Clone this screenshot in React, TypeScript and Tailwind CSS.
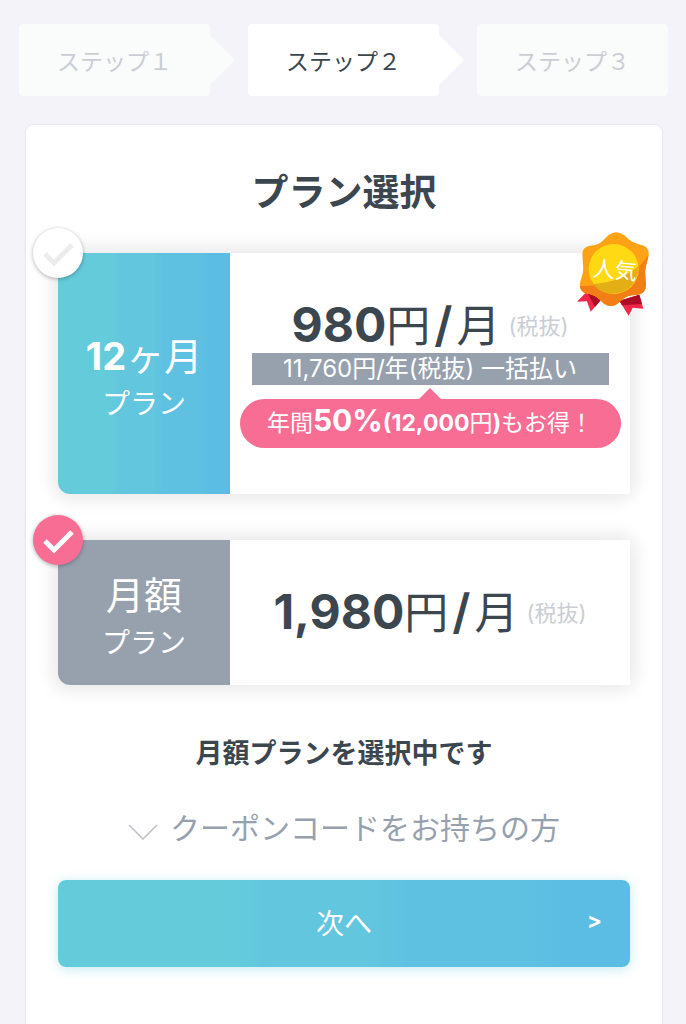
import React, { useState } from "react";

const steps = ["ステップ１", "ステップ２", "ステップ３"];

const blueBands =
  "bg-[linear-gradient(90deg,#64cbdb_31%,#61c6de_37%,#61c6de_55%,#5fc1e1_61%,#5fc1e1_81%,#5cbde4_88%)]";

function StepBar({ current }: { current: number }) {
  return (
    <ol className="grid grid-cols-3 gap-[38px] pt-6 pr-[18px] pl-[19px]">
      {steps.map((label, i) => {
        const active = i === current;
        return (
          <li
            key={label}
            aria-current={active ? "step" : undefined}
            className={`relative flex h-[72px] items-center justify-center rounded pt-1 text-[23px] ${
              active ? "bg-white text-[#3c464f]" : "bg-[#fafbfb] text-[#caced4]"
            }`}
          >
            {label}
            {i < steps.length - 1 && (
              <svg
                aria-hidden="true"
                viewBox="0 0 25 50"
                className={`absolute top-[11px] left-full h-[50px] w-[25px] ${
                  active ? "fill-white" : "fill-[#fafbfb]"
                }`}
              >
                <path d="M0 0 25 25 0 50Z" />
              </svg>
            )}
          </li>
        );
      })}
    </ol>
  );
}

function PopularBadge() {
  return (
    <div className="absolute -top-[21px] -right-5 h-[84px] w-[74px]">
      <svg viewBox="0 0 222 252" className="h-full w-full" aria-hidden="true">
        <path d="M39 172 3 209 33 208 44 239 80 198Z" fill="#f0264a" />
        <path d="M39 172 80 198 57 225 36 186Z" fill="#ad0b26" />
        <path d="M130 206 158 251 170 227 202 230 190 188Z" fill="#f0264a" />
        <path d="M130 206 138 220 198 216 190 188Z" fill="#ad0b26" />
        <path
          d="M98 9Q121-8 145 10L158 22Q170 33 188 37L200 40Q220 46 218 70L210 102Q206 116 208 132L210 156Q211 184 186 188L168 190Q152 192 140 202L124 216Q104 229 84 215L70 202Q58 190 42 187L28 184Q8 176 12 152L19 128Q23 114 21 98L19 66Q20 44 42 41L58 39Q70 36 80 26Z"
          fill="#ffa314"
        />
        <path
          d="M218 70 210 102Q206 116 208 132L210 156Q211 184 186 188L168 190Q152 192 140 202L124 216Q104 229 84 215L70 202Q58 190 42 187L28 184Q13 178 12 162 150 166 218 70Z"
          fill="#f27e16"
        />
        <circle cx="113" cy="111" r="75" fill="#ffd913" />
        <path d="M186 103A75 75 0 0 1 52 156Q134 152 186 103Z" fill="#e3ae16" />
      </svg>
      <span className="absolute top-[23px] right-0 left-1 rotate-5 text-center text-[22px] leading-[30px] text-white">
        人気
      </span>
    </div>
  );
}

type PlanProps = {
  value: string;
  selected: boolean;
  onSelect: (v: string) => void;
  panel: string;
  title: React.ReactNode;
  price: string;
  children?: React.ReactNode;
  badge?: React.ReactNode;
  size: string;
};

function Plan({ value, selected, onSelect, panel, title, price, children, badge, size }: PlanProps) {
  return (
    <label className={`relative flex cursor-pointer rounded-bl-xl bg-white ${size}`}>
      <span
        aria-hidden="true"
        className="absolute inset-0 rounded-xl shadow-[0_0_16px_7px_rgba(0,0,0,0.08)]"
      />
      <span
        className={`relative flex w-[172px] shrink-0 flex-col items-center justify-center rounded-bl-xl pt-2 text-white ${panel}`}
      >
        <span className="text-[38px] leading-[52px]">{title}</span>
        <span className="text-[28px] leading-[44px]">プラン</span>
      </span>
      <span className="relative flex min-w-0 grow flex-col items-center justify-center bg-white">
        <span className="flex h-[54px] items-baseline text-[44px] leading-[54px] text-[#3c464f]">
          <b className="text-[48px] leading-none font-bold">{price}</b>円
          <b className="px-1 text-[48px] leading-none font-semibold">/</b>月
          <span className="ml-2 self-center text-[22px] leading-none text-[#caced4]">(税抜)</span>
        </span>
        {children}
      </span>
      <span className="absolute -top-[25px] -left-[25px] size-[50px]">
        <input
          type="radio"
          name="plan"
          value={value}
          checked={selected}
          onChange={() => onSelect(value)}
          className="block size-full cursor-pointer appearance-none rounded-full bg-white shadow-[0_1px_4px_rgba(0,0,0,0.3)] checked:bg-[#f76d94]"
        />
        <svg
          viewBox="0 0 50 50"
          aria-hidden="true"
          className={`pointer-events-none absolute inset-0 fill-none stroke-5 ${selected ? "stroke-white" : "stroke-[#ececec]"}`}
        >
          <path d="M12 26 21 35 39 17" />
        </svg>
      </span>
      {badge}
    </label>
  );
}

export default function App() {
  const [plan, setPlan] = useState("monthly");
  return (
    <div className="min-h-screen bg-[#f4f3f9] font-['Inter','Noto_Sans_CJK_JP',sans-serif]">
      <StepBar current={1} />
      <main className="mt-[29px] mr-6 ml-[26px] min-h-[899px] rounded-t-lg bg-white px-8 pt-[42px] pb-14 shadow-[0_0_2px_1px_rgba(0,0,0,0.05)]">
        <h1 className="text-center text-[37px] leading-[52px] font-bold text-[#3c464f]">プラン選択</h1>
        <div className="mt-[34px] flex flex-col gap-[46px]">
          <Plan
            value="yearly"
            selected={plan === "yearly"}
            onSelect={setPlan}
            panel={blueBands}
            size="min-h-[241px]"
            title={
              <>
                <b className="font-bold">12</b>ヶ月
              </>
            }
            price="980"
            badge={<PopularBadge />}
          >
            <span className="h-8 w-[357px] bg-[#97a1ae] text-center text-[24px] leading-8 whitespace-nowrap text-white">
              11,760円/年(税抜) 一括払い
            </span>
            <span className="relative mt-[14px] h-[49px] w-[381px] rounded-full bg-[#f76d94] text-center text-[23px] leading-[49px] whitespace-nowrap text-white">
              <svg
                viewBox="0 0 24 12"
                aria-hidden="true"
                className="absolute -top-[11px] left-1/2 h-3 w-6 -translate-x-1/2 fill-[#f76d94]"
              >
                <path d="M0 12 12 0 24 12Z" />
              </svg>
              年間<b className="text-[30px] leading-none">50%</b>
              <b>(12,000</b>円<b>)</b>もお得！
            </span>
          </Plan>
          <Plan
            value="monthly"
            selected={plan === "monthly"}
            onSelect={setPlan}
            panel="bg-[#97a1ae]"
            size="min-h-[145px]"
            title="月額"
            price="1,980"
          />
        </div>
        <p className="mt-[49px] text-center text-[27px] leading-10 font-bold text-[#3c464f]">
          {plan === "monthly" ? "月額プランを選択中です" : "12ヶ月プランを選択中です"}
        </p>
        <button
          type="button"
          className="mx-auto mt-[31px] flex cursor-pointer items-center gap-3 text-[30px] leading-[46px] text-[#97a1ae]"
        >
          <svg
            viewBox="0 0 30 16"
            aria-hidden="true"
            className="mt-2 h-4 w-[30px] fill-none stroke-[#b9c0c8] stroke-[1.5]"
          >
            <path d="M1 1 15 15 29 1" />
          </svg>
          クーポンコードをお持ちの方
        </button>
        <button
          type="button"
          className={`relative mt-[29px] h-[87px] w-full cursor-pointer rounded-lg text-[28px] text-white shadow-[0_2px_12px_rgba(100,203,219,0.4)] ${blueBands}`}
        >
          次へ
          <b aria-hidden="true" className="absolute top-1/2 right-7 -translate-y-1/2 pb-2 text-[22px]">
            &gt;
          </b>
        </button>
      </main>
    </div>
  );
}
